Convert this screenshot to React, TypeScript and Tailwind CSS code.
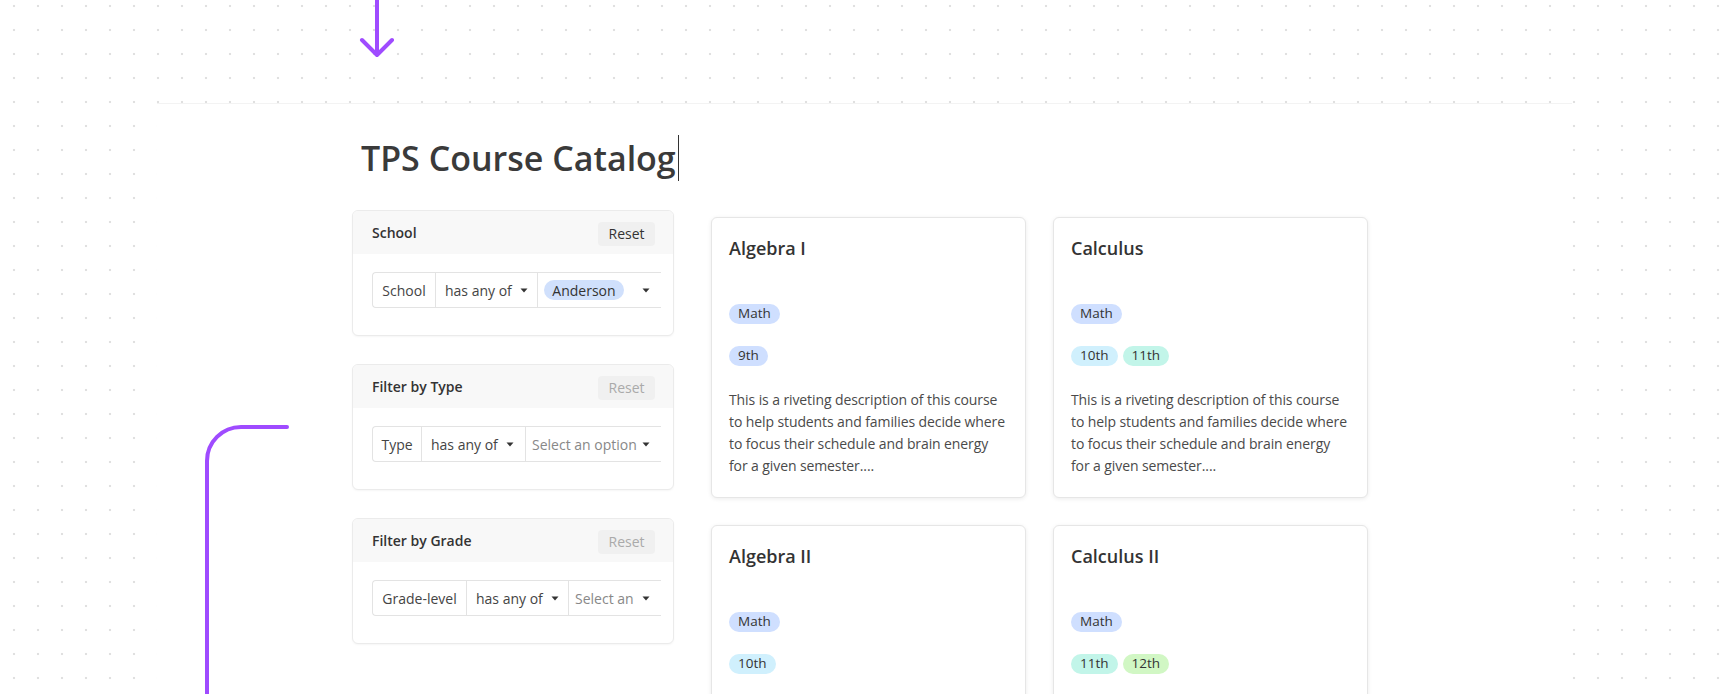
import type { ReactNode } from 'react';

type Tone = 'blue' | 'cyan' | 'teal' | 'green';

interface Course {
  name: string;
  subject: string;
  grades: { label: string; tone: Tone }[];
}

interface Filter {
  title: string;
  field: string;
  fieldW: number;
  opW: number;
  value: ReactNode;
  active: boolean;
}

const toneClass: Record<Tone, string> = {
  blue: 'bg-[#cfdfff]',
  cyan: 'bg-[#d0f0fd]',
  teal: 'bg-[#c2f5e9]',
  green: 'bg-[#d1f7c4]',
};

const DESCRIPTION =
  'This is a riveting description of this course to help students and families decide where to focus their schedule and brain energy for a given semester....';

const courses: Course[] = [
  { name: 'Algebra I', subject: 'Math', grades: [{ label: '9th', tone: 'blue' }] },
  {
    name: 'Calculus',
    subject: 'Math',
    grades: [
      { label: '10th', tone: 'cyan' },
      { label: '11th', tone: 'teal' },
    ],
  },
  { name: 'Algebra II', subject: 'Math', grades: [{ label: '10th', tone: 'cyan' }] },
  {
    name: 'Calculus II',
    subject: 'Math',
    grades: [
      { label: '11th', tone: 'teal' },
      { label: '12th', tone: 'green' },
    ],
  },
];

function Caret() {
  return (
    <svg width="8" height="5" viewBox="0 0 8 5" className="shrink-0">
      <path d="M0.5 0.5h7L4 4.6z" fill="#333" />
    </svg>
  );
}

function Pill({ label, tone }: { label: string; tone: Tone }) {
  return (
    <span
      className={`inline-flex h-[20px] items-center rounded-full px-[9px] text-[13.5px] leading-none text-[#333] ${toneClass[tone]}`}
    >
      {label}
    </span>
  );
}

const filters: Filter[] = [
  {
    title: 'School',
    field: 'School',
    fieldW: 63,
    opW: 102,
    active: true,
    value: (
      <span className="inline-flex h-[20px] w-[80px] shrink-0 items-center justify-center rounded-full bg-[#d0e0fc] text-[14px] text-[#333]">
        Anderson
      </span>
    ),
  },
  {
    title: 'Filter by Type',
    field: 'Type',
    fieldW: 49,
    opW: 104,
    active: false,
    value: <span className="min-w-0 overflow-hidden whitespace-nowrap text-[#888]">Select an option</span>,
  },
  {
    title: 'Filter by Grade',
    field: 'Grade-level',
    fieldW: 94,
    opW: 102,
    active: false,
    value: <span className="min-w-0 overflow-hidden whitespace-nowrap text-[#888]">Select an</span>,
  },
];

function FilterCard({ f }: { f: Filter }) {
  return (
    <div className="h-[126px] overflow-hidden rounded-md border border-[#ebebeb] bg-white shadow-[0_1px_2px_rgba(0,0,0,0.04)]">
      <div className="flex h-[43px] items-center justify-between bg-[#f8f8f8] pl-[19px] pr-[18px]">
        <span className="text-[14px] font-semibold text-[#333]">{f.title}</span>
        <button
          className={`mt-[2px] h-[24px] w-[57px] rounded bg-[#f0f0f0] text-[14px] ${
            f.active ? 'text-[#333]' : 'text-[#aaa]'
          }`}
        >
          Reset
        </button>
      </div>
      <div className="pl-[19px] pt-[18px]">
        <div className="flex h-[36px] w-[289px] overflow-hidden rounded-l border-y border-l border-[#e3e3e3] text-[14px] text-[#444]">
          <div
            className="flex shrink-0 items-center justify-center border-r border-[#e3e3e3]"
            style={{ width: f.fieldW }}
          >
            {f.field}
          </div>
          <div
            className="flex shrink-0 items-center gap-[8px] border-r border-[#e3e3e3] pl-[9px]"
            style={{ width: f.opW }}
          >
            has any of
            <Caret />
          </div>
          <div className="flex min-w-0 flex-1 items-center justify-between gap-[4px] pl-[6px] pr-[11px]">
            {f.value}
            <Caret />
          </div>
        </div>
      </div>
    </div>
  );
}

function CourseCard({ c }: { c: Course }) {
  return (
    <div className="h-[281px] overflow-hidden rounded-md border border-[#e6e6e6] bg-white pl-[17px] pr-[16px] pt-[17px] shadow-[0_1px_4px_rgba(0,0,0,0.08)]">
      <h2 className="text-[18px] font-semibold leading-[26px] text-[#333]">{c.name}</h2>
      <div className="mt-[43px] flex">
        <Pill label={c.subject} tone="blue" />
      </div>
      <div className="mt-[22px] flex gap-[5px]">
        {c.grades.map((g) => (
          <Pill key={g.label} label={g.label} tone={g.tone} />
        ))}
      </div>
      <p className="mt-[23px] text-[14px] leading-[22px] tracking-[-0.1px] text-[#4a4a4a]">{DESCRIPTION}</p>
    </div>
  );
}

export default function App() {
  return (
    <div className="relative h-[694px] w-full overflow-hidden bg-white bg-[radial-gradient(circle,#e0e0e0_1px,transparent_1.6px)] bg-[length:24px_24px] bg-[position:2px_-6px] pt-[103px] font-['Open_Sans','Noto_Sans',sans-serif]">
      <div className="ml-[157px] h-[600px] w-[1415px] border-t border-[#f3f3f3] bg-white pl-[195px] pt-[30px]">
        <h1 className="ml-[9px] flex h-[48px] items-center text-[34px] font-semibold leading-[48px] text-[#3a3a3a]">
          TPS Course Catalog
          <span className="ml-[2px] inline-block h-[46px] w-[1.5px] bg-[#333]" />
        </h1>
        <div className="mt-[28px] flex gap-[37px]">
          <div className="flex w-[322px] shrink-0 flex-col gap-[28px]">
            {filters.map((f) => (
              <FilterCard key={f.title} f={f} />
            ))}
          </div>
          <div className="mt-[7px] grid grid-cols-[315px_315px] gap-[27px]">
            {courses.map((c) => (
              <CourseCard key={c.name} c={c} />
            ))}
          </div>
        </div>
      </div>

      {/* connector lines drawn over the canvas */}
      <svg className="pointer-events-none absolute inset-0 h-full w-full" fill="none">
        <path
          d="M377 -4V53M362 40l15 15 15-15"
          stroke="#9f4bff"
          strokeWidth="4"
          strokeLinecap="round"
          strokeLinejoin="round"
        />
        <path
          d="M287 427H241A34 34 0 0 0 207 461V700"
          stroke="#9f4bff"
          strokeWidth="4"
          strokeLinecap="round"
        />
      </svg>
    </div>
  );
}
